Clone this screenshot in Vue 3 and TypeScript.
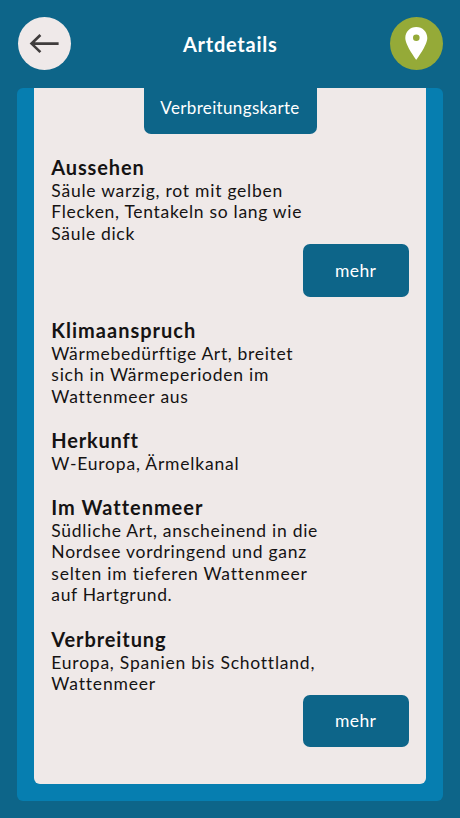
<script setup lang="ts">
interface Line {
  text: string
  spacing: number
}
interface Section {
  title: Line
  lines: Line[]
  more?: boolean
}

const sections: Section[] = [
  {
    title: { text: 'Aussehen', spacing: 0.85 },
    lines: [
      { text: 'Säule warzig, rot mit gelben', spacing: 0.75 },
      { text: 'Flecken, Tentakeln so lang wie', spacing: 0.7 },
      { text: 'Säule dick', spacing: 0.67 },
    ],
    more: true,
  },
  {
    title: { text: 'Klimaanspruch', spacing: 1 },
    lines: [
      { text: 'Wärmebedürftige Art, breitet', spacing: 0.66 },
      { text: 'sich in Wärmeperioden im', spacing: 0.75 },
      { text: 'Wattenmeer aus', spacing: 0.77 },
    ],
  },
  {
    title: { text: 'Herkunft', spacing: 0.8 },
    lines: [{ text: 'W-Europa, Ärmelkanal', spacing: 0.79 }],
  },
  {
    title: { text: 'Im Wattenmeer', spacing: 0.97 },
    lines: [
      { text: 'Südliche Art, anscheinend in die', spacing: 0.72 },
      { text: 'Nordsee vordringend und ganz', spacing: 0.72 },
      { text: 'selten im tieferen Wattenmeer', spacing: 0.76 },
      { text: 'auf Hartgrund.', spacing: 0.64 },
    ],
  },
  {
    title: { text: 'Verbreitung', spacing: 0.9 },
    lines: [
      { text: 'Europa, Spanien bis Schottland,', spacing: 0.77 },
      { text: 'Wattenmeer', spacing: 0.82 },
    ],
    more: true,
  },
]
</script>

<template>
  <div class="screen">
    <header class="header">
      <button class="round back" aria-label="Zurück">
        <svg viewBox="0 0 53 53"><path d="M41 26.6H13.5M22.6 18 13.7 26.6l8.9 8.6" /></svg>
      </button>
      <h1>Artdetails</h1>
      <button class="round map" aria-label="Karte">
        <svg viewBox="0 0 53 53">
          <path fill-rule="evenodd" d="M26.3 10C20 10 15.3 14.9 15.3 21C15.3 28.4 26.3 42.8 26.3 42.8S37.3 28.4 37.3 21C37.3 14.9 32.5 10 26.3 10ZM26.3 17.5a3.3 3.3 0 1 1 0 6.6a3.3 3.3 0 0 1 0-6.6Z" />
        </svg>
      </button>
    </header>
    <main class="frame">
      <div class="panel">
        <button class="tab">Verbreitungskarte</button>
        <section v-for="s in sections" :key="s.title.text" class="section">
          <h2 :style="{ letterSpacing: s.title.spacing + 'px' }">{{ s.title.text }}</h2>
          <p>
            <span v-for="l in s.lines" :key="l.text" class="line" :style="{ letterSpacing: l.spacing + 'px' }">{{ l.text }}</span>
          </p>
          <button v-if="s.more" class="more">mehr</button>
        </section>
      </div>
    </main>
  </div>
</template>

<style>
body {
  background: #0d6589;
}
</style>

<style scoped>
.screen {
  box-sizing: border-box;
  height: 818px;
  padding: 0 17.33px 17.5px;
  display: flex;
  flex-direction: column;
  background: #0d6589;
  font-family: Lato, sans-serif;
  color: #151313;
}
.header {
  box-sizing: border-box;
  height: 87.7px;
  padding-bottom: 0.7px;
  flex: none;
  display: flex;
  align-items: center;
  justify-content: space-between;
}
h1 {
  margin: 0;
  color: #fff;
  font-size: 20px;
  line-height: 24px;
  letter-spacing: 0.75px;
}
button {
  border: 0;
  padding: 0;
  font-family: inherit;
}
.round {
  width: 53px;
  height: 53px;
  border-radius: 50%;
}
.round svg {
  display: block;
  width: 53px;
  height: 53px;
}
.back {
  margin-left: 0.4px;
  background: #efe9e9;
}
.back path {
  fill: none;
  stroke: #403c3c;
  stroke-width: 2.7;
}
.back svg {
  width: 52.5px;
}
.map {
  background: #95aa38;
}
.map path {
  fill: #fff;
}
.frame {
  box-sizing: border-box;
  flex: 1;
  padding: 0 17px 16.5px;
  border-radius: 6px;
  background: #067eb0;
}
.panel {
  box-sizing: border-box;
  height: 100%;
  padding: 0 17px;
  border-radius: 0 0 6px 6px;
  background: #efe9e8;
  display: flex;
  flex-direction: column;
}
.tab {
  box-sizing: border-box;
  align-self: center;
  width: 173px;
  height: 46px;
  flex: none;
  margin-bottom: 22.3px;
  padding-bottom: 6px;
  border-radius: 0 0 7px 7px;
  background: #0d6589;
  color: #fff;
  font-size: 17px;
  letter-spacing: 0.35px;
}
.section {
  display: flex;
  flex-direction: column;
  margin-bottom: 21.6px;
}
h2 {
  margin: 0;
  padding-bottom: 2px;
  font-size: 20px;
  line-height: 22px;
}
p {
  margin: 0;
  font-size: 17.5px;
  line-height: 21.5px;
}
.line {
  display: block;
  white-space: nowrap;
}
.more {
  align-self: flex-end;
  width: 106px;
  height: 52.7px;
  border-radius: 7px;
  background: #0d6589;
  color: #fff;
  font-size: 17.5px;
  letter-spacing: 0.4px;
}
</style>
